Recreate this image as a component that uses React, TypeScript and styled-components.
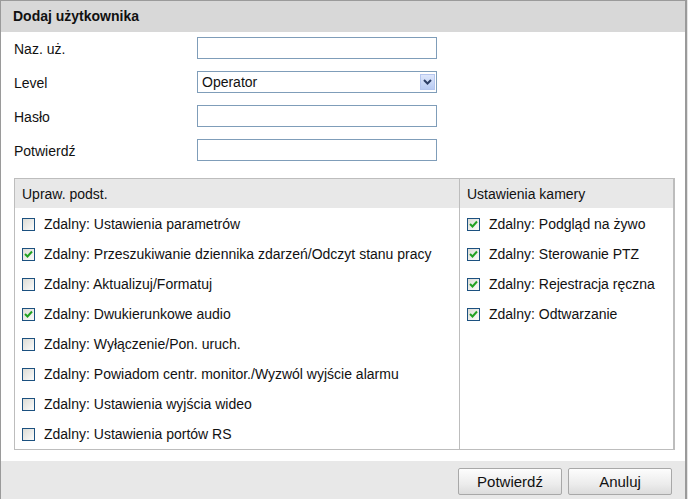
import React from "react"
import styled, { createGlobalStyle } from "styled-components"

const GlobalStyle = createGlobalStyle`
    html, body {
        margin: 0;
        padding: 0;
        background: #e4e4e4;
        font-family: "Liberation Sans", Arial, sans-serif;
        font-size: 14px;
        color: #111;
    }
`

interface Perm {
    label: string;
    checked: boolean;
}

const basicPerms: Perm[] = [
    { label: "Zdalny: Ustawienia parametrów", checked: false },
    { label: "Zdalny: Przeszukiwanie dziennika zdarzeń/Odczyt stanu pracy", checked: true },
    { label: "Zdalny: Aktualizuj/Formatuj", checked: false },
    { label: "Zdalny: Dwukierunkowe audio", checked: true },
    { label: "Zdalny: Wyłączenie/Pon. uruch.", checked: false },
    { label: "Zdalny: Powiadom centr. monitor./Wyzwól wyjście alarmu", checked: false },
    { label: "Zdalny: Ustawienia wyjścia wideo", checked: false },
    { label: "Zdalny: Ustawienia portów RS", checked: false },
]

const cameraPerms: Perm[] = [
    { label: "Zdalny: Podgląd na żywo", checked: true },
    { label: "Zdalny: Sterowanie PTZ", checked: true },
    { label: "Zdalny: Rejestracja ręczna", checked: true },
    { label: "Zdalny: Odtwarzanie", checked: true },
]

const CheckBox: React.FC<{ checked: boolean }> = ({ checked }) => (
    <Box>
        {checked &&
            <svg width="9" height="8" viewBox="0 0 9 8">
                <path d="M1 4 L3.5 6.5 L8 1.5" stroke="#21a121" strokeWidth="2" fill="none" />
            </svg>
        }
    </Box>
)

const PermList: React.FC<{ perms: Perm[] }> = ({ perms }) => (
    <List>
        {perms.map(p => (
            <PermRow key={p.label}>
                <CheckBox checked={p.checked} />
                <span>{p.label}</span>
            </PermRow>
        ))}
    </List>
)

export default function App() {
    return (
        <>
            <GlobalStyle />
            <Panel>
                <Header>Dodaj użytkownika</Header>
                <Body>
                    <Form>
                        <Label>Naz. uż.</Label>
                        <Input />
                        <Label>Level</Label>
                        <Select>
                            <span>Operator</span>
                            <Arrow>
                                <svg width="9" height="6" viewBox="0 0 9 6">
                                    <path d="M1 1 L4.5 4.5 L8 1" stroke="#2c3e66" strokeWidth="2" fill="none" />
                                </svg>
                            </Arrow>
                        </Select>
                        <Label>Hasło</Label>
                        <Input />
                        <Label>Potwierdź</Label>
                        <Input />
                    </Form>
                    <Table>
                        <Column>
                            <ColumnTitle>Upraw. podst.</ColumnTitle>
                            <PermList perms={basicPerms} />
                        </Column>
                        <Column side>
                            <ColumnTitle>Ustawienia kamery</ColumnTitle>
                            <PermList perms={cameraPerms} />
                        </Column>
                    </Table>
                </Body>
                <Footer>
                    <Button>Potwierdź</Button>
                    <Button>Anuluj</Button>
                </Footer>
            </Panel>
        </>
    )
}

const Panel = styled.div`
    width: 684px;
    height: 498px;
    border: 1px solid #9a9a9a;
    border-right: 2px solid #9a9a9a;
    border-bottom: none;
    display: flex;
    flex-direction: column;
    background: #fff;
`

const Header = styled.div`
    height: 31px;
    line-height: 31px;
    background: #d8d8d8;
    padding-left: 12px;
    font-weight: bold;
`

const Body = styled.div`
    padding: 5px 10px 0 13px;
    flex: 1;
`

const Form = styled.div`
    display: grid;
    grid-template-columns: 183px 240px;
    grid-auto-rows: 22px;
    row-gap: 12px;
    align-items: center;
`

const Label = styled.div`
    line-height: 22px;
    padding-top: 1px;
`

const Input = styled.div`
    height: 20px;
    width: 238px;
    border: 1px solid #7f9db9;
`

const Select = styled.div`
    height: 20px;
    width: 234px;
    border: 1px solid #7f9db9;
    display: flex;
    align-items: center;
    justify-content: space-between;
    padding-left: 4px;
`

const Arrow = styled.div`
    width: 15px;
    height: 16px;
    margin-right: 1px;
    background: linear-gradient(#dde6fb, #b8cbf3);
    border: 1px solid #b5c6ee;
    box-sizing: border-box;
    display: flex;
    align-items: center;
    justify-content: center;
`

const Table = styled.div`
    margin-top: 17px;
    width: 658px;
    height: 270px;
    border: 1px solid #bdbdbd;
    border-right-width: 2px;
    display: flex;
`

const Column = styled.div<{ side?: boolean }>`
    display: flex;
    flex-direction: column;
    ${p => p.side ? "flex: 1; border-left: 1px solid #bdbdbd;" : "width: 444px;"}
`

const ColumnTitle = styled.div`
    height: 29px;
    line-height: 30px;
    background: #e8e8e8;
    padding-left: 7px;
`

const List = styled.div`
    display: flex;
    flex-direction: column;
    padding: 1px 0 0 7px;
`

const PermRow = styled.div`
    height: 30px;
    display: flex;
    align-items: center;
    gap: 9px;
`

const Box = styled.div`
    width: 13px;
    height: 13px;
    box-sizing: border-box;
    border: 1px solid #1c5180;
    background: linear-gradient(135deg, #dcdcd6, #fbfbfa);
    display: flex;
    align-items: center;
    justify-content: center;
`

const Footer = styled.div`
    margin-top: 11px;
    height: 38px;
    background: #e8e8e8;
    display: flex;
    justify-content: flex-end;
    align-items: flex-start;
    gap: 6px;
    padding: 7px 13px 0 0;
    box-sizing: border-box;
`

const Button = styled.div`
    width: 102px;
    height: 25px;
    border: 1px solid #a8a8a8;
    border-radius: 2px;
    background: linear-gradient(#fdfdfd, #ececec 60%, #dcdcdc);
    display: flex;
    align-items: center;
    justify-content: center;
    font-size: 15px;
`
